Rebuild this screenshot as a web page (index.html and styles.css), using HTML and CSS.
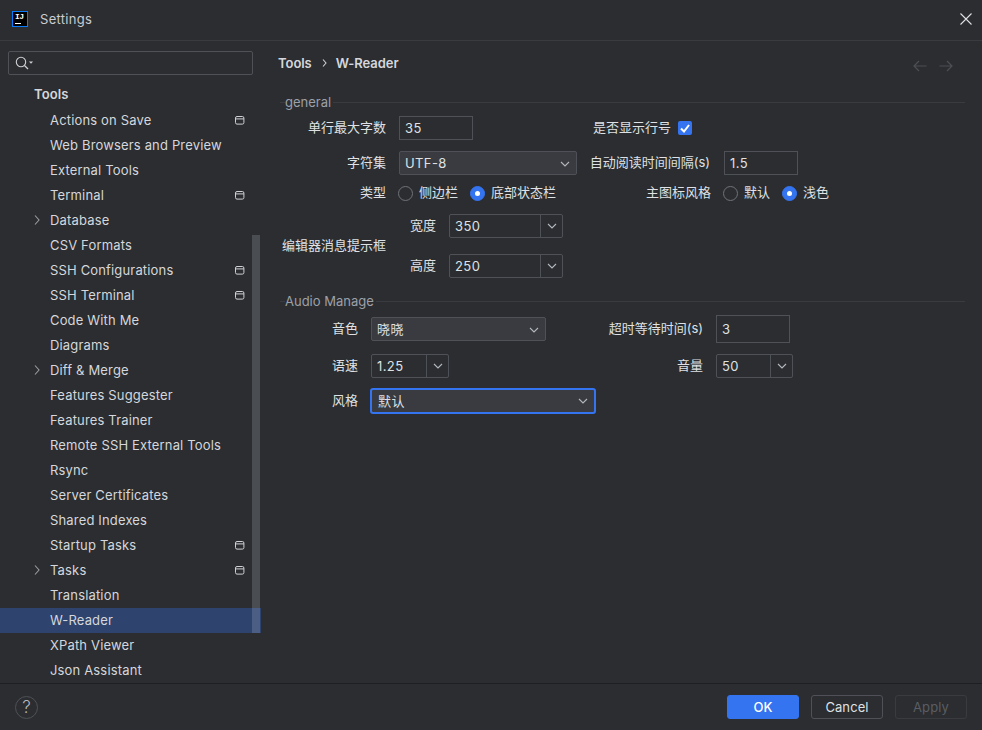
FILE: index.html
```html
<!DOCTYPE html>
<html lang="zh">
<head>
<meta charset="utf-8">
<title>Settings</title>
<link rel="stylesheet" href="styles.css">
</head>
<body>
<svg class="defs" width="0" height="0">
  <symbol id="chev-d" viewBox="0 0 10 6"><path d="M1 1l4 4 4-4" fill="none" stroke="#b4b8bf" stroke-width="1.1"/></symbol>
  <symbol id="chev-r" viewBox="0 0 6 10"><path d="M1 .5l4 4.5-4 4.5" fill="none" stroke="#9a9da3" stroke-width="1.1"/></symbol>
  <symbol id="proj" viewBox="0 0 10 9"><rect x=".5" y=".5" width="8.4" height="7.6" rx="1.5" fill="none" stroke="#ced0d6"/><path d="M.5 2.9h8.4" stroke="#ced0d6"/></symbol>
</svg>
<div class="dialog">
  <header class="titlebar">
    <div class="logo"><span class="logo-text">IJ</span><span class="logo-bar"></span></div>
    <span class="title">Settings</span>
    <svg class="close" width="12" height="12" viewBox="0 0 12 12"><path d="M.5.5l11 11M11.500.5l-11 11" stroke="#dfe1e5" stroke-width="1.1"/></svg>
  </header>
  <div class="body">
    <aside class="sidebar">
      <div class="search">
        <svg width="19" height="14" viewBox="0 0 19 14"><circle cx="6" cy="6" r="4.700" fill="none" stroke="#ced0d6" stroke-width="1.1"/><path d="M9.500 9.500l3.500 3.500" stroke="#ced0d6" stroke-width="1.2"/><path d="M14 5.500h4l-2 2.200z" fill="#ced0d6"/></svg>
      </div>
      <div class="tree">
        <div class="node head">Tools</div>
        <div class="node">Actions on Save<svg class="pi"><use href="#proj"/></svg></div>
        <div class="node">Web Browsers and Preview</div>
        <div class="node">External Tools</div>
        <div class="node">Terminal<svg class="pi"><use href="#proj"/></svg></div>
        <div class="node"><svg class="arrow"><use href="#chev-r"/></svg>Database</div>
        <div class="node">CSV Formats</div>
        <div class="node">SSH Configurations<svg class="pi"><use href="#proj"/></svg></div>
        <div class="node">SSH Terminal<svg class="pi"><use href="#proj"/></svg></div>
        <div class="node">Code With Me</div>
        <div class="node">Diagrams</div>
        <div class="node"><svg class="arrow"><use href="#chev-r"/></svg>Diff &amp; Merge</div>
        <div class="node">Features Suggester</div>
        <div class="node">Features Trainer</div>
        <div class="node">Remote SSH External Tools</div>
        <div class="node">Rsync</div>
        <div class="node">Server Certificates</div>
        <div class="node">Shared Indexes</div>
        <div class="node">Startup Tasks<svg class="pi"><use href="#proj"/></svg></div>
        <div class="node"><svg class="arrow"><use href="#chev-r"/></svg>Tasks<svg class="pi"><use href="#proj"/></svg></div>
        <div class="node">Translation</div>
        <div class="node selected">W-Reader</div>
        <div class="node">XPath Viewer</div>
        <div class="node">Json Assistant</div>
      </div>
      <div class="scrollbar"></div>
    </aside>
    <main class="main">
      <div class="crumbs">
        <span class="crumb">Tools</span>
        <svg width="5" height="8" viewBox="0 0 5 8"><path d="M1 .5l3 3.500-3 3.500" fill="none" stroke="#ced0d6" stroke-width="1.1"/></svg>
        <span class="crumb">W-Reader</span>
        <span class="nav">
          <svg width="14" height="12" viewBox="0 0 14 12"><path d="M13.500 6H1M6 1L1 6l5 5" fill="none" stroke="#4c4f55" stroke-width="1.200"/></svg>
          <svg width="14" height="12" viewBox="0 0 14 12"><path d="M.5 6H13M8 1l5 5-5 5" fill="none" stroke="#4c4f55" stroke-width="1.200"/></svg>
        </span>
      </div>

      <div class="group g1"><span class="group-name">general</span></div>
      <div class="row r-input">
        <div class="col-a"><label class="lab w-a">单行最大字数</label><div class="input w74 h24">35</div></div>
        <div class="col-b inset"><label class="lab plain">是否显示行号</label>
          <span class="check"><svg width="10" height="9" viewBox="0 0 10 9"><path d="M1 4.500l3 3 5-6.500" fill="none" stroke="#fff" stroke-width="2"/></svg></span>
        </div>
      </div>
      <div class="row r-input">
        <div class="col-a"><label class="lab w-a">字符集</label><div class="combo w178">UTF-8<svg class="cd"><use href="#chev-d"/></svg></div></div>
        <div class="col-b"><label class="lab w-b">自动阅读时间间隔(s)</label><div class="input w74 h24">1.5</div></div>
      </div>
      <div class="row r-radio">
        <div class="col-a">
          <label class="lab w-a tight">类型</label>
          <span class="radio"></span><span class="rtext">侧边栏</span>
          <span class="radio on"></span><span class="rtext">底部状态栏</span>
        </div>
        <div class="col-b">
          <label class="lab w-b tight">主图标风格</label>
          <span class="radio"></span><span class="rtext">默认</span>
          <span class="radio on"></span><span class="rtext">浅色</span>
        </div>
      </div>
      <div class="row r-editor">
        <label class="lab w-a">编辑器消息提示框</label>
        <div class="size-rows">
          <div class="size-row"><label class="lab">宽度</label><div class="ecombo w114"><span class="eval">350</span><span class="ebtn"><svg class="cd2"><use href="#chev-d"/></svg></span></div></div>
          <div class="size-row"><label class="lab">高度</label><div class="ecombo w114"><span class="eval">250</span><span class="ebtn"><svg class="cd2"><use href="#chev-d"/></svg></span></div></div>
        </div>
      </div>

      <div class="group g2"><span class="group-name">Audio Manage</span></div>
      <div class="row r-a1">
        <div class="col-a"><label class="lab w-c">音色</label><div class="combo w175">晓晓<svg class="cd"><use href="#chev-d"/></svg></div></div>
        <div class="col-b"><label class="lab w-d">超时等待时间(s)</label><div class="input w74 h28">3</div></div>
      </div>
      <div class="row r-a2">
        <div class="col-a"><label class="lab w-c">语速</label><div class="ecombo w78"><span class="eval">1.25</span><span class="ebtn"><svg class="cd2"><use href="#chev-d"/></svg></span></div></div>
        <div class="col-b"><label class="lab w-d">音量</label><div class="ecombo w77"><span class="eval">50</span><span class="ebtn"><svg class="cd2"><use href="#chev-d"/></svg></span></div></div>
      </div>
      <div class="row r-a3">
        <div class="col-a"><label class="lab w-c narrow">风格</label><div class="combo focus">默认<svg class="cd"><use href="#chev-d"/></svg></div></div>
      </div>
    </main>
  </div>
  <footer class="footer">
    <span class="help">?</span>
    <div class="buttons">
      <span class="btn primary">OK</span>
      <span class="btn">Cancel</span>
      <span class="btn disabled">Apply</span>
    </div>
  </footer>
</div>
</body>
</html>
```

FILE: styles.css
```css
* { box-sizing: border-box; }
html, body { margin: 0; padding: 0; }
body {
  width: 982px; height: 730px; overflow: hidden;
  background: #2b2d30; color: #dfe1e5;
  font: 13px/16px Inter, "Noto Sans CJK SC", sans-serif;
}
.defs { position: absolute; }
.dialog { display: flex; flex-direction: column; height: 730px; }

.titlebar { height: 41px; flex: none; display: flex; align-items: center; padding: 0 10px 2px 12px; border-bottom: 1px solid #393b40; }
.logo { width: 16px; height: 16px; background: #000; border: 1px solid #087cfa; position: relative; flex: none; }
.logo-text { position: absolute; left: 2px; top: 0; font: 700 8px/9px "Liberation Mono", monospace; color: #fff; letter-spacing: -.5px; }
.logo-bar { position: absolute; left: 2px; bottom: 2px; width: 6px; height: 1px; background: #fff; }
.title { margin-left: 12px; color: #c9ccd2; flex: 1; letter-spacing: .3px; }

.body { flex: 1; display: flex; min-height: 0; }
.sidebar { width: 261px; flex: none; position: relative; overflow: hidden; }
.search { margin: 10px 8px 8px; width: 245px; height: 24px; border: 1px solid #4e5157; border-radius: 2px; display: flex; align-items: center; padding-left: 6px; }
.tree { display: flex; flex-direction: column; }
.node { height: 25px; padding: 0 17px 1px 50px; display: flex; align-items: center; position: relative; letter-spacing: .16px; color: #d5d7dc; white-space: nowrap; }
.node.head { padding-left: 34px; padding-bottom: 3px; font-weight: 600; letter-spacing: .1px; }
.node.selected { background: #2e436e; }
.pi { position: absolute; left: 235px; top: 8px; width: 10px; height: 9px; }
.arrow { position: absolute; left: 34px; top: 7px; width: 6px; height: 10px; }
.scrollbar { position: absolute; left: 252px; top: 194px; width: 8px; height: 398px; background: rgba(200, 205, 220, .2); }

.main { flex: 1; min-width: 0; }
.crumbs { height: 44px; display: flex; align-items: center; padding: 0 29px 0 17px; gap: 10px; }
.crumb { font-weight: 600; color: #d5d7dc; letter-spacing: -.05px; }
.crumb + svg + .crumb { margin-left: -1px; }
.nav { margin-left: auto; display: flex; gap: 12px; padding-top: 5px; }

.group { height: 16px; margin-left: 19px; margin-right: 17px; display: flex; align-items: center; color: #9da0a8; letter-spacing: 0; }
.group::before { content: ""; width: 5px; height: 1px; background: #393b40; margin-right: 0; }
.group::after { content: ""; flex: 1; height: 1px; background: #393b40; margin-left: 2px; }
.g1 { margin-top: 9px; }
.g2 { margin-top: 15px; }

.row { display: flex; align-items: center; }
.r-input { height: 24px; margin-top: 6px; }
.r-input + .r-input { margin-top: 11px; }
.r-radio { height: 20px; margin-top: 8px; }
.r-editor { height: 64px; margin-top: 11px; align-items: center; }
.r-a1 { height: 28px; margin-top: 6px; }
.r-a2 { height: 24px; margin-top: 11px; }
.r-a3 { height: 26px; margin-top: 10px; }

.col-a { width: 324px; display: flex; align-items: center; flex: none; }
.col-b { display: flex; align-items: center; }
.col-b.inset { padding-left: 8px; }
.lab { text-align: right; flex: none; white-space: nowrap; color: #dfe1e5; padding-bottom: 2px; }
.w-a { width: 125px; margin-right: 13px; }
.w-a.tight { margin-right: 12px; }
.w-b { width: 125px; margin-right: 14px; }
.w-b.tight { width: 126px; margin-right: 12px; }
.w-c { width: 97px; margin-right: 13px; }
.w-c.narrow { margin-right: 12px; }
.w-d { width: 118px; margin-right: 13px; }
.plain { margin-right: 7px; }

.input { border: 1px solid #4e5157; padding-left: 5px; display: flex; align-items: center; letter-spacing: .4px; flex: none; }
.w74 { width: 74px; }
.h24 { height: 24px; }
.h28 { height: 28px; }

.combo { height: 24px; background: #393b40; border: 1px solid #4e5157; border-radius: 2px; padding-left: 5px; display: flex; align-items: center; position: relative; letter-spacing: .4px; flex: none; }
.w178 { width: 178px; }
.w175 { width: 175px; }
.cd { position: absolute; right: 6px; top: 9px; width: 10px; height: 6px; }
.combo.focus { width: 226px; height: 26px; border: 2px solid #3574f0; border-radius: 3px; padding-left: 6px; padding-bottom: 1px; }
.combo.focus .cd { top: 8px; }

.ecombo { height: 24px; border: 1px solid #4e5157; border-radius: 2px; display: flex; align-items: center; flex: none; }
.w114 { width: 114px; }
.w78 { width: 78px; }
.w77 { width: 77px; }
.eval { flex: 1; padding-left: 5px; letter-spacing: .4px; }
.ebtn { width: 22px; height: 22px; border-left: 1px solid #4e5157; display: flex; align-items: center; justify-content: center; flex: none; }
.cd2 { width: 10px; height: 6px; }

.size-rows { display: flex; flex-direction: column; gap: 16px; margin-left: 11px; }
.size-row { display: flex; align-items: center; gap: 13px; }

.radio { width: 15px; height: 15px; border-radius: 50%; border: 1px solid #6f737a; flex: none; position: relative; }
.radio.on { background: #3574f0; border-color: #3574f0; }
.radio.on::after { content: ""; position: absolute; left: 4px; top: 4px; width: 5px; height: 5px; border-radius: 50%; background: #fff; }
.rtext { margin: 0 12px 0 6px; white-space: nowrap; padding-bottom: 2px; }

.check { width: 14px; height: 14px; background: #3574f0; border-radius: 2px; display: flex; align-items: center; justify-content: center; flex: none; }

.footer { height: 47px; flex: none; border-top: 1px solid #1e1f22; display: flex; align-items: center; padding: 0 15px; }
.help { width: 23px; height: 23px; border: 1px solid #4e5157; border-radius: 50%; display: flex; align-items: center; justify-content: center; font-size: 17px; font-weight: 300; color: #b4b8bf; }
.buttons { margin-left: auto; display: flex; gap: 12px; }
.btn { width: 72px; height: 24px; border: 1px solid #4e5157; border-radius: 3px; display: flex; align-items: center; justify-content: center; letter-spacing: .1px; }
.btn.primary { background: #3574f0; border-color: #3574f0; color: #fff; font-weight: 500; }
.btn.disabled { color: #5a5d63; border-color: #393b40; }
```
